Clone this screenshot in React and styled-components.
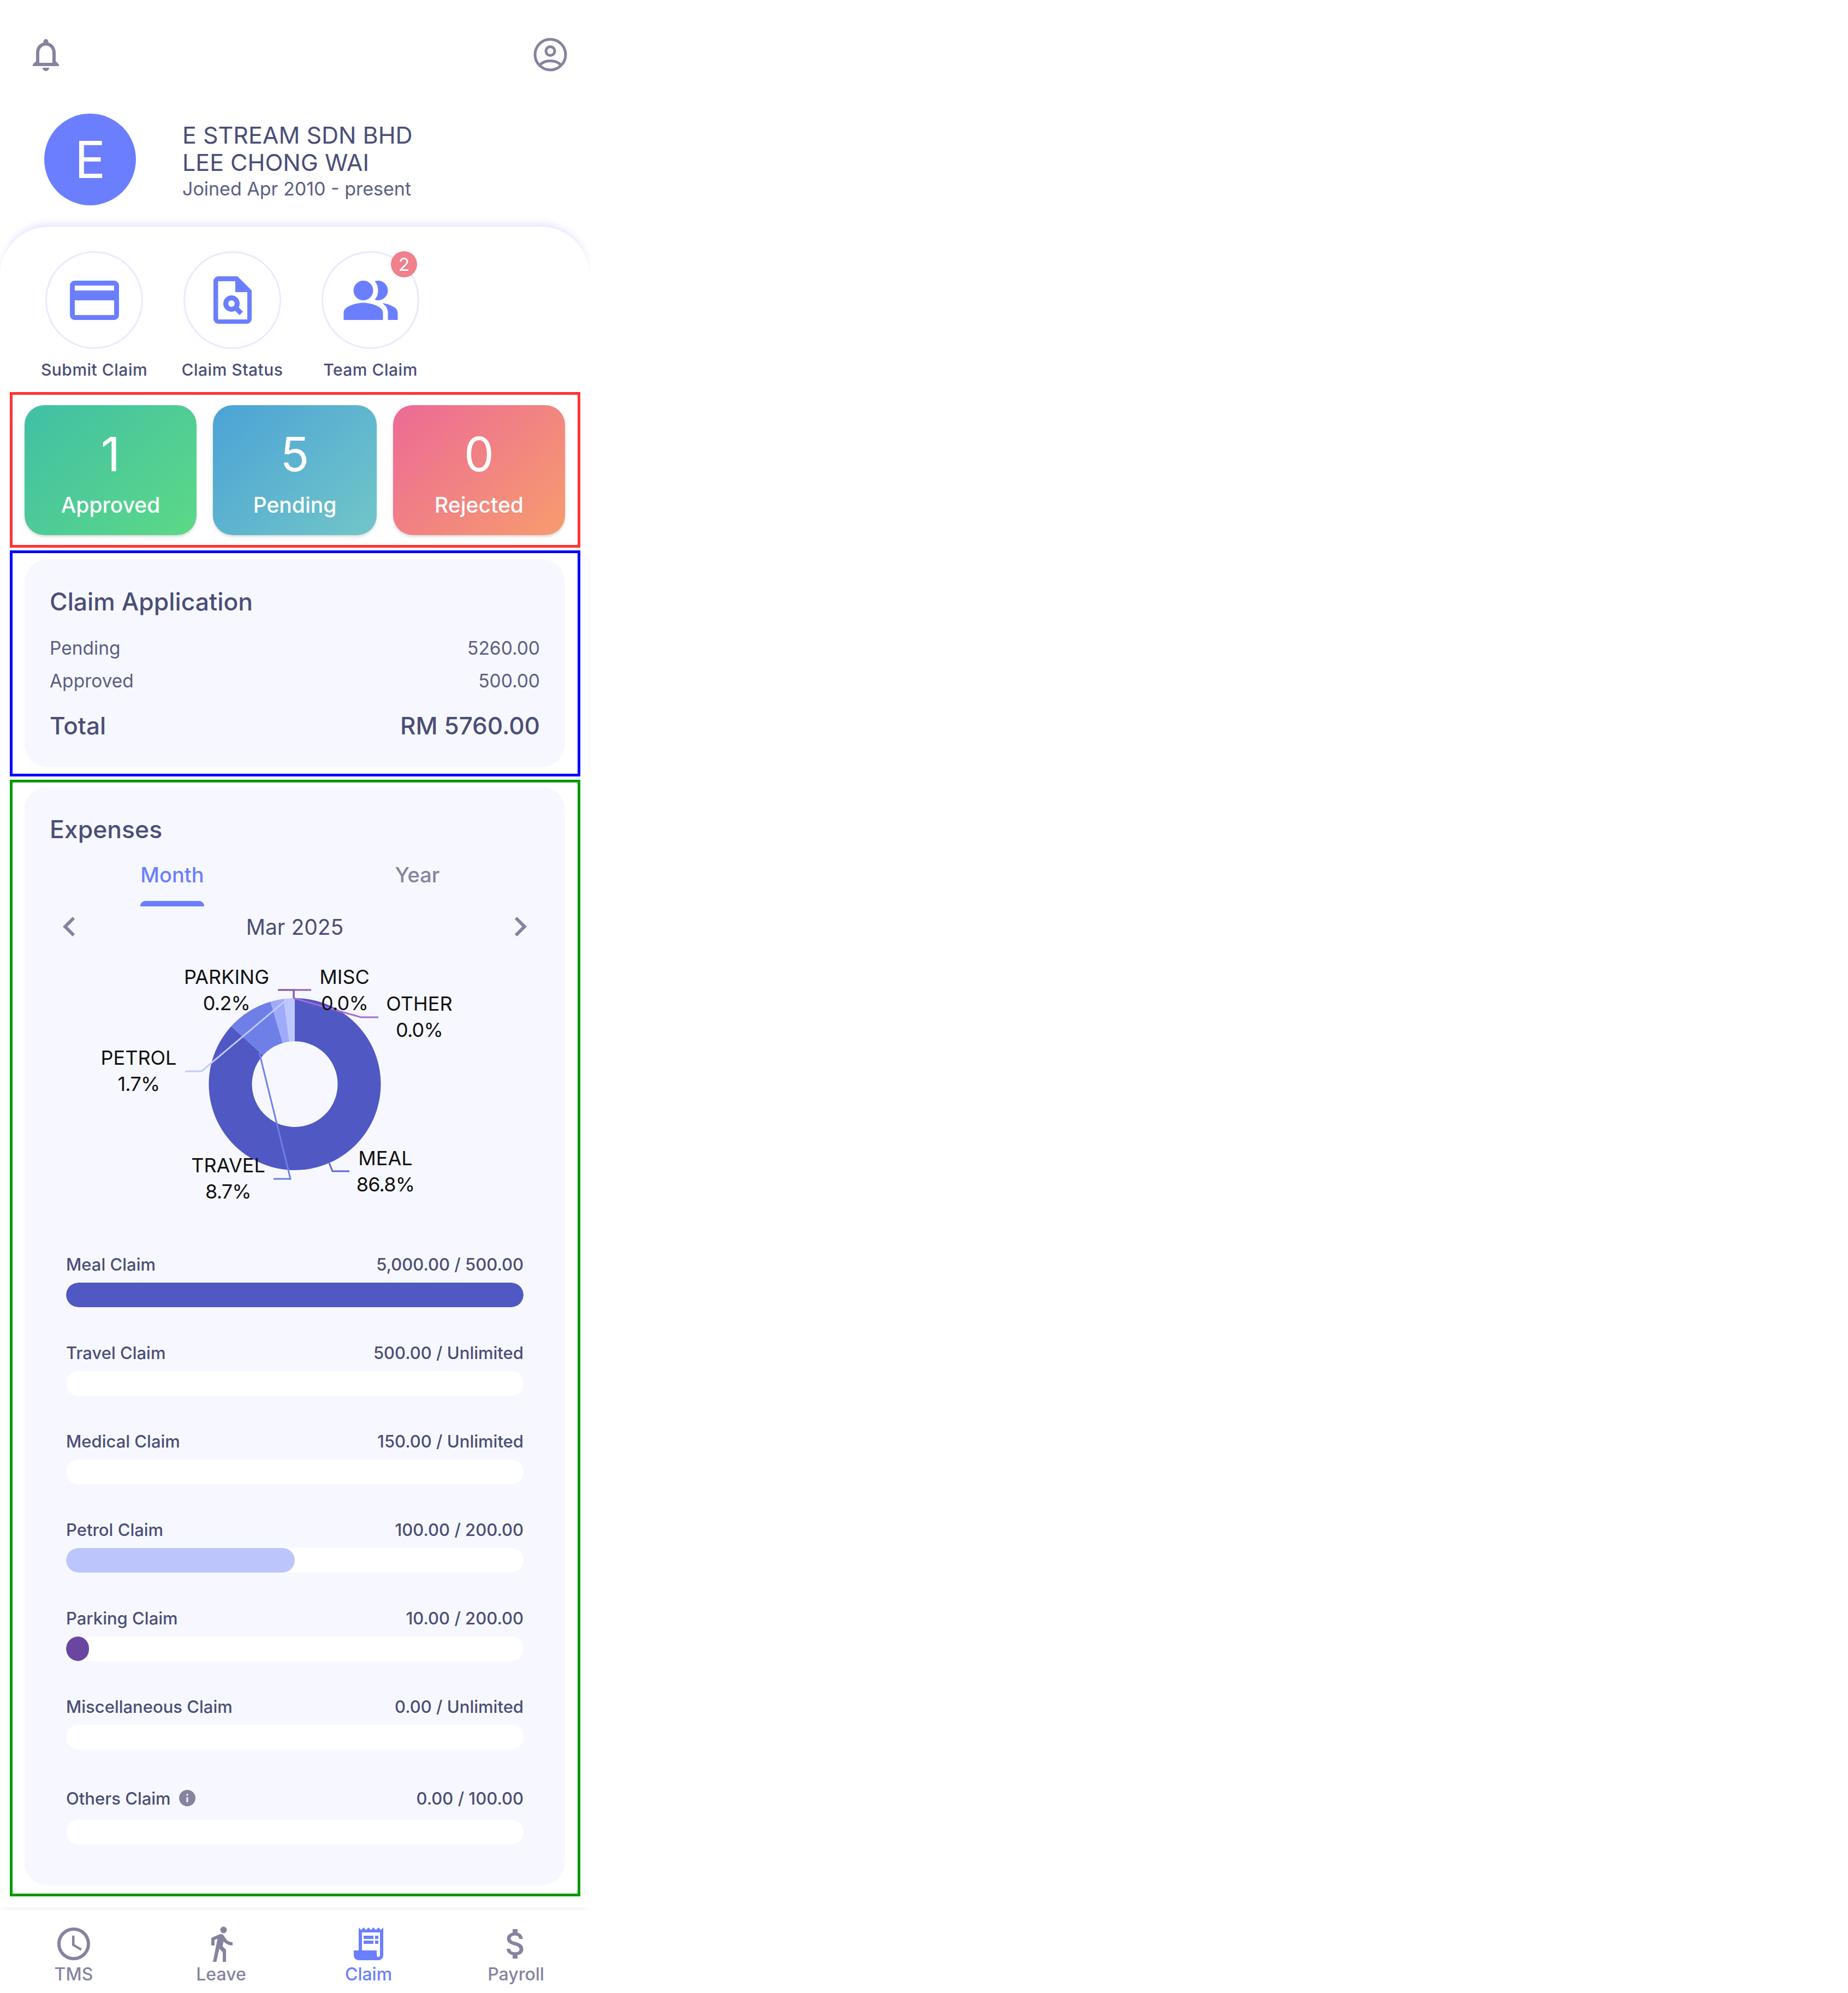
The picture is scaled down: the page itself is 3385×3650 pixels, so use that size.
import React from "react";
import styled, { createGlobalStyle } from "styled-components";
import {
  MdNotificationsNone,
  MdOutlineCreditCard,
  MdPeopleAlt,
  MdAccessTime,
  MdDirectionsWalk,
  MdReceiptLong,
  MdAttachMoney,
  MdInfo,
  MdChevronLeft,
  MdChevronRight,
} from "react-icons/md";

const GlobalStyle = createGlobalStyle`
  html, body { margin: 0; padding: 0; background: #fff; }
  body { font-family: Inter, "Noto Sans", sans-serif; color: #4a4e78; }
  * { box-sizing: border-box; }
`;

const Phone = styled.div`
  width: 1080px;
  height: 3650px;
  display: flex;
  flex-direction: column;
  overflow: hidden;
`;

const TopBar = styled.div`
  height: 200px;
  padding: 64px 36px 0 48px;
  display: flex;
  justify-content: space-between;
  align-items: flex-start;
  color: #8583a0;
`;

const Profile = styled.div`
  height: 215px;
  padding: 8px 0 0 81px;
  display: flex;
  gap: 85px;
`;

const Avatar = styled.div`
  width: 168px;
  height: 168px;
  border-radius: 50%;
  background: #6b7ffe;
  color: #fff;
  font-size: 94px;
  font-weight: 400;
  display: flex;
  align-items: center;
  justify-content: center;
`;

const ProfileText = styled.div`
  padding-top: 14px;
  font-size: 43px;
  line-height: 50px;
  font-weight: 400;
`;

const Joined = styled.div`
  font-size: 34px;
  line-height: 48px;
  color: #5b5e85;
`;

const Shortcuts = styled.div`
  height: 303px;
  padding: 45px 0 0 46px;
  display: flex;
  border-radius: 90px 90px 0 0;
  box-shadow: 0 -10px 16px -6px #dedfff;
  background: #fff;
`;

const Shortcut = styled.div`
  width: 253px;
  display: flex;
  flex-direction: column;
  align-items: center;
`;

const ShortcutCircle = styled.div`
  position: relative;
  width: 179px;
  height: 179px;
  border-radius: 50%;
  border: 3px solid #e8eafe;
  color: #6b7ffe;
  display: flex;
  align-items: center;
  justify-content: center;
`;

const Badge = styled.span`
  position: absolute;
  top: -3px;
  right: 1px;
  width: 48px;
  height: 48px;
  border-radius: 50%;
  background: #f0808c;
  color: #fff;
  font-size: 33px;
  display: flex;
  align-items: center;
  justify-content: center;
`;

const ShortcutLabel = styled.div`
  margin-top: 18px;
  font-size: 30px;
  line-height: 40px;
  font-weight: 500;
  letter-spacing: 0.5px;
`;

const Frame = styled.div`
  margin-left: 18px;
  width: 1045px;
  height: ${(p) => p.$height}px;
  margin-bottom: ${(p) => p.$gap}px;
  border: 5px solid ${(p) => p.$color};
  padding: ${(p) => p.$padTop}px 23px 0 22px;
`;

const StatRow = styled.div`
  display: flex;
  gap: 30px;
`;

const StatCard = styled.div`
  width: ${(p) => p.$width}px;
  height: 238px;
  border-radius: 36px;
  background: linear-gradient(135deg, ${(p) => p.$from}, ${(p) => p.$to});
  box-shadow: 0 3px 5px #00000026;
  color: #fff;
  display: flex;
  flex-direction: column;
  align-items: center;
`;

const StatNumber = styled.div`
  margin-top: 37px;
  font-size: 87px;
  line-height: 105px;
  font-weight: 400;
`;

const StatLabel = styled.div`
  margin-top: 17px;
  font-size: 39px;
  line-height: 48px;
  font-weight: 500;
`;

const Card = styled.div`
  width: 990px;
  height: ${(p) => p.$height}px;
  border-radius: 42px;
  background: #f7f8ff;
  padding: 50px 46px 0;
`;

const CardTitle = styled.div`
  font-size: 44.5px;
  line-height: 56px;
  font-weight: 500;
`;

const AmountRow = styled.div`
  display: flex;
  justify-content: space-between;
  font-size: 33.5px;
  line-height: 60px;
  color: #5b5e85;
`;

const TotalRow = styled.div`
  display: flex;
  justify-content: space-between;
  margin-top: 22px;
  font-size: 44px;
  line-height: 60px;
  font-weight: 500;
`;

const AmountList = styled.div`
  margin-top: 27px;
`;

const Tabs = styled.div`
  margin-top: 28px;
  display: flex;
`;

const Tab = styled.div`
  width: 449px;
  height: 85px;
  display: flex;
  justify-content: center;
`;

const TabLabel = styled.div`
  position: relative;
  height: 85px;
  padding-top: 2px;
  font-size: 38px;
  line-height: 50px;
  font-weight: 500;
  color: ${(p) => (p.$active ? "#6b7ffe" : "#8583a0")};
  ${(p) =>
    p.$active &&
    `&::after {
      content: "";
      position: absolute;
      left: 0;
      right: 0;
      bottom: 0;
      height: 10px;
      border-radius: 9px 9px 0 0;
      background: #6b7ffe;
    }`}
`;

const DateRow = styled.div`
  margin-top: 7px;
  height: 60px;
  display: flex;
  align-items: center;
  justify-content: space-between;
  font-size: 39px;
  color: #4a4e78;
`;

const DateArrow = styled.span`
  display: flex;
  color: #8583a0;
`;

const Chart = styled.svg`
  display: block;
  width: 898px;
  height: 530px;
  margin-top: 21px;
  font-family: Inter, sans-serif;
  font-size: 36px;
  fill: #111;
`;

const PctText = styled.text`
  letter-spacing: -0.8px;
`;

const BarList = styled.div`
  margin: 3px 30px 0;
`;

const BarRow = styled.div`
  margin-bottom: 49px;
`;

const BarHeader = styled.div`
  height: ${(p) => (p.$tall ? 80 : 68)}px;
  display: flex;
  justify-content: space-between;
  align-items: center;
  font-size: 31px;
  font-weight: 500;
`;

const BarName = styled.div`
  display: flex;
  align-items: center;
  gap: 12px;
`;

const InfoDot = styled.span`
  display: flex;
  color: #8583a0;
`;

const BarTrack = styled.div`
  height: 45px;
  border-radius: 23px;
  background: #fff;
  overflow: hidden;
`;

const BarFill = styled.div`
  height: 100%;
  border-radius: 23px;
  background: ${(p) => p.$color};
`;

const BottomNav = styled.div`
  margin-top: 25px;
  height: 152px;
  display: flex;
  box-shadow: 0 -6px 8px -4px #00000012;
`;

const NavItem = styled.div`
  width: 270px;
  padding-top: 26px;
  display: flex;
  flex-direction: column;
  align-items: center;
  color: ${(p) => (p.$active ? "#6b7ffe" : "#8583a0")};
  font-size: 32px;
  line-height: 40px;
  font-weight: 500;
`;

const NavIcon = styled.div`
  height: 68px;
  display: flex;
  margin-bottom: 4px;
`;

// outlined person badge, the head is a ring and the shoulders a single arc
function UserIcon() {
  return (
    <svg width="72" height="72" viewBox="-5 -5 72 72" fill="none" stroke="currentColor" strokeWidth="5">
      <circle cx="31" cy="31" r="28" />
      <circle cx="31" cy="24.5" r="8" />
      <path d="M11 51C16 45 23 42.5 31 42.5S46 45 51 51" />
    </svg>
  );
}

// document with a filled corner fold and a small magnifier
function FileSearchIcon() {
  return (
    <svg width="70" height="87" viewBox="0 0 70 87" fill="currentColor">
      <path
        fillRule="evenodd"
        d="M9 0H44L70 26V78a9 9 0 0 1-9 9H9a9 9 0 0 1-9-9V9a9 9 0 0 1 9-9ZM8.5 9V79H62V29H40V9Z"
      />
      <circle cx="33" cy="50" r="10.5" fill="none" stroke="currentColor" strokeWidth="9" />
      <path d="M42 59L51 68" fill="none" stroke="currentColor" strokeWidth="9" />
    </svg>
  );
}

const cx = 540;
const cy = 1985.5;
const originX = 91;
const originY = 1748;

// donut wedge between two clock angles, page coordinates
function wedge(a0, a1, r = 157.5, r2 = 78.5) {
  const pt = (a, rad) => {
    const t = (a * Math.PI) / 180;
    return `${cx + rad * Math.sin(t)} ${cy - rad * Math.cos(t)}`;
  };
  const large = a1 - a0 > 180 ? 1 : 0;
  return `M${pt(a0, r)} A${r} ${r} 0 ${large} 1 ${pt(a1, r)} L${pt(a1, r2)} A${r2} ${r2} 0 ${large} 0 ${pt(a0, r2)} Z`;
}

const wedges = [
  { from: 0, to: 312.3, color: "#5058c4" },
  { from: 312.3, to: 343.6, color: "#6e80e8" },
  { from: 343.6, to: 352.6, color: "#9fabfa" },
  { from: 352.6, to: 360, color: "#bcc8ff" },
];

const leaders = [
  { points: "603,2130 609,2145 640,2145", color: "#5b68d8" },
  { points: "475,1928 532,2159 501,2159", color: "#6e80e8" },
  { points: "520,1835 369,1962 339,1962", color: "#c0cbff" },
  { points: "538,1828 538,1813 509,1813", color: "#7b4fa6" },
  { points: "538,1828 538,1813 570,1813", color: "#8a5cb8" },
  { points: "538,1828 661,1863 693,1863", color: "#a56bd6" },
];

const chartLabels = [
  { name: "PARKING", pct: "0.2%", x: 415, y: 1789 },
  { name: "MISC", pct: "0.0%", x: 631, y: 1789 },
  { name: "OTHER", pct: "0.0%", x: 768, y: 1838 },
  { name: "PETROL", pct: "1.7%", x: 254, y: 1937 },
  { name: "TRAVEL", pct: "8.7%", x: 418, y: 2134 },
  { name: "MEAL", pct: "86.8%", x: 706, y: 2121 },
];

const bars = [
  { name: "Meal Claim", value: "5,000.00 / 500.00", pct: 100, color: "#5058c4" },
  { name: "Travel Claim", value: "500.00 / Unlimited", pct: 0 },
  { name: "Medical Claim", value: "150.00 / Unlimited", pct: 0 },
  { name: "Petrol Claim", value: "100.00 / 200.00", pct: 50, color: "#bcc6fd" },
  { name: "Parking Claim", value: "10.00 / 200.00", pct: 5, color: "#6b46a0" },
  { name: "Miscellaneous Claim", value: "0.00 / Unlimited", pct: 0 },
  { name: "Others Claim", value: "0.00 / 100.00", pct: 0, info: true },
];

const shortcuts = [
  { label: "Submit Claim", icon: <MdOutlineCreditCard size={108} /> },
  { label: "Claim Status", icon: <FileSearchIcon /> },
  { label: "Team Claim", icon: <MdPeopleAlt size={108} />, badge: 2 },
];

const nav = [
  { label: "TMS", icon: <MdAccessTime size={72} /> },
  { label: "Leave", icon: <MdDirectionsWalk size={72} /> },
  { label: "Claim", icon: <MdReceiptLong size={72} />, active: true },
  { label: "Payroll", icon: <MdAttachMoney size={72} /> },
];

export default function App() {
  return (
    <Phone>
      <GlobalStyle />
      <TopBar>
        <MdNotificationsNone size={72} />
        <UserIcon />
      </TopBar>
      <Profile>
        <Avatar>E</Avatar>
        <ProfileText>
          <div>E STREAM SDN BHD</div>
          <div>LEE CHONG WAI</div>
          <Joined>Joined Apr 2010 - present</Joined>
        </ProfileText>
      </Profile>
      <Shortcuts>
        {shortcuts.map((s) => (
          <Shortcut key={s.label}>
            <ShortcutCircle>
              {s.icon}
              {s.badge && <Badge>{s.badge}</Badge>}
            </ShortcutCircle>
            <ShortcutLabel>{s.label}</ShortcutLabel>
          </Shortcut>
        ))}
      </Shortcuts>

      <Frame $color="#ff3333" $height={285} $gap={5} $padTop={19}>
        <StatRow>
          <StatCard $width={315} $from="#41bfa6" $to="#5cd986">
            <StatNumber>1</StatNumber>
            <StatLabel>Approved</StatLabel>
          </StatCard>
          <StatCard $width={300} $from="#4ba3d6" $to="#72c6c8">
            <StatNumber>5</StatNumber>
            <StatLabel>Pending</StatLabel>
          </StatCard>
          <StatCard $width={315} $from="#ec6a96" $to="#f79c6e">
            <StatNumber>0</StatNumber>
            <StatLabel>Rejected</StatLabel>
          </StatCard>
        </StatRow>
      </Frame>

      <Frame $color="#0000ff" $height={414} $gap={6} $padTop={11}>
        <Card $height={381}>
          <CardTitle>Claim Application</CardTitle>
          <AmountList>
            <AmountRow>
              <span>Pending</span>
              <span>5260.00</span>
            </AmountRow>
            <AmountRow>
              <span>Approved</span>
              <span>500.00</span>
            </AmountRow>
          </AmountList>
          <TotalRow>
            <span>Total</span>
            <span>RM 5760.00</span>
          </TotalRow>
        </Card>
      </Frame>

      <Frame $color="#009900" $height={2045} $gap={0} $padTop={8}>
        <Card $height={2012}>
          <CardTitle>Expenses</CardTitle>
          <Tabs>
            <Tab>
              <TabLabel $active>Month</TabLabel>
            </Tab>
            <Tab>
              <TabLabel>Year</TabLabel>
            </Tab>
          </Tabs>
          <DateRow>
            <DateArrow>
              <MdChevronLeft size={72} />
            </DateArrow>
            <span>Mar 2025</span>
            <DateArrow>
              <MdChevronRight size={72} />
            </DateArrow>
          </DateRow>
          <Chart viewBox={`${originX} ${originY} 898 530`}>
            {wedges.map((w) => (
              <path key={w.from} d={wedge(w.from, w.to)} fill={w.color} />
            ))}
            {leaders.map((l) => (
              <polyline key={l.points + l.color} points={l.points} fill="none" stroke={l.color} strokeWidth="3" />
            ))}
            {chartLabels.map((l) => (
              <g key={l.name}>
                <text x={l.x} y={l.y + 13} textAnchor="middle">{l.name}</text>
                <PctText x={l.x} y={l.y + 61} textAnchor="middle">{l.pct}</PctText>
              </g>
            ))}
          </Chart>
          <BarList>
            {bars.map((b) => (
              <BarRow key={b.name}>
                <BarHeader $tall={b.info}>
                  <BarName>
                    {b.name}
                    {b.info && (
                      <InfoDot>
                        <MdInfo size={36} />
                      </InfoDot>
                    )}
                  </BarName>
                  <span>{b.value}</span>
                </BarHeader>
                <BarTrack>
                  {b.pct > 0 && <BarFill $color={b.color} style={{ width: `${b.pct}%` }} />}
                </BarTrack>
              </BarRow>
            ))}
          </BarList>
        </Card>
      </Frame>

      <BottomNav>
        {nav.map((n) => (
          <NavItem key={n.label} $active={n.active}>
            <NavIcon>{n.icon}</NavIcon>
            {n.label}
          </NavItem>
        ))}
      </BottomNav>
    </Phone>
  );
}
